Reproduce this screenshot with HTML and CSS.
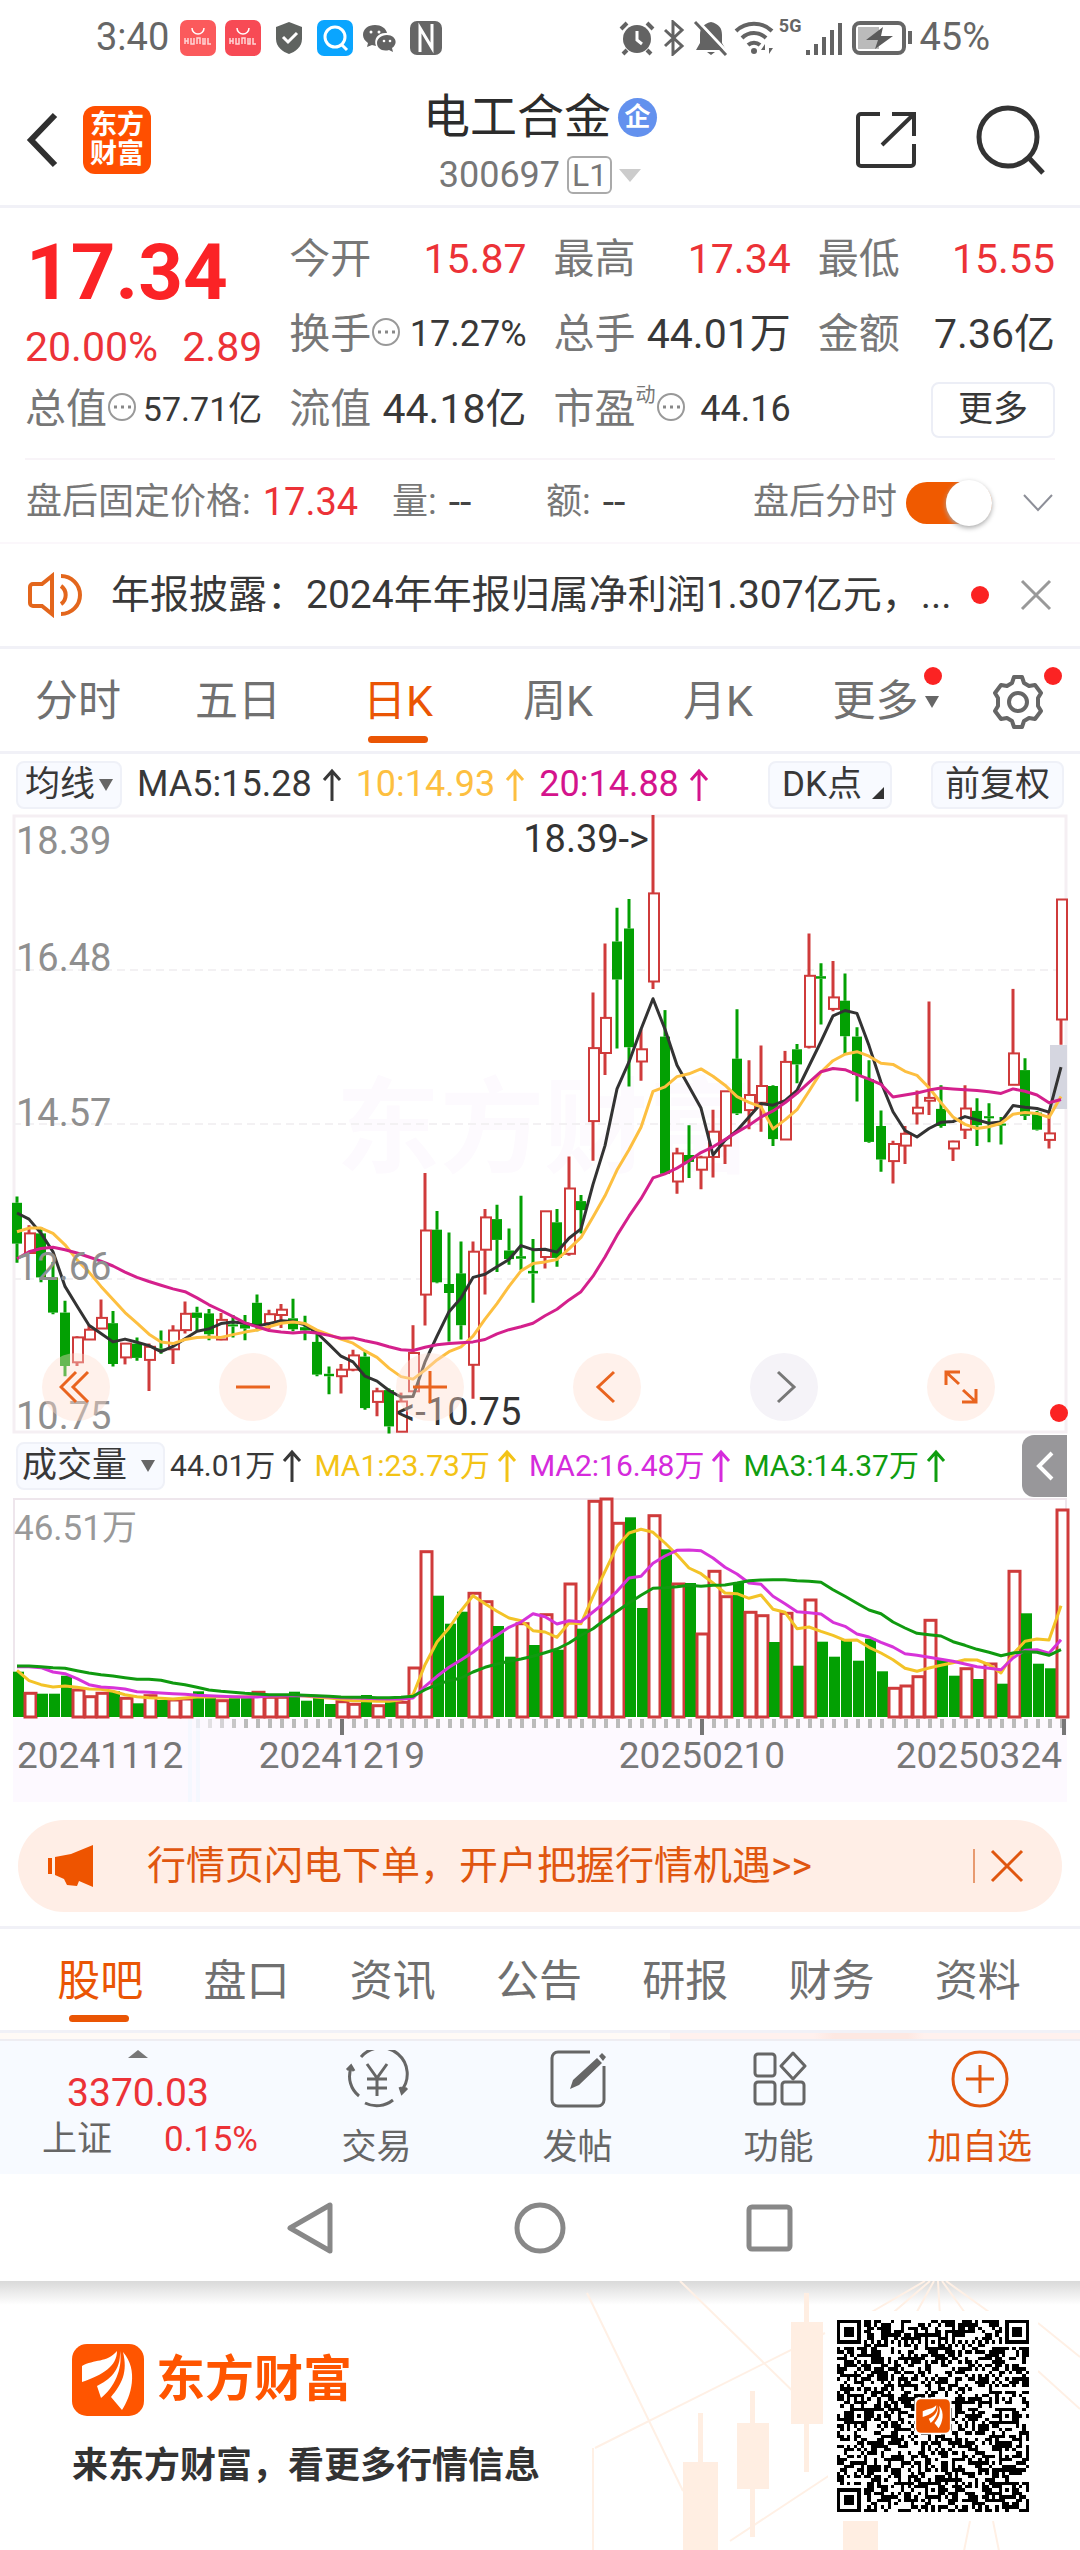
FILE: index.html
```html
<!DOCTYPE html>
<html lang="zh-CN">
<head>
<meta charset="utf-8">
<meta name="viewport" content="width=device-width, initial-scale=1">
<title>电工合金 300697</title>
<link rel="stylesheet" href="styles.css">
</head>
<body>
<div class="status">
  <div class="status-side">
    <span class="status-text">3:40</span>
    <svg class="app" viewBox="0 0 36 36"><rect width="36" height="36" rx="7" fill="#fb5a5c"/><path d="M12 8a6 6 0 0 0 12 0" fill="none" stroke="#fff" stroke-width="1.5"/><path d="M5 18v6M8 18v6M5 21h3M11 18v6h3v-6M17 24v-6h3v6M23 18v6h2v-6M28 18v6h3" stroke="#ffd5d5" stroke-width="1.5" fill="none"/></svg>
    <svg class="app" viewBox="0 0 36 36"><rect width="36" height="36" rx="7" fill="#f74a55"/><path d="M12 8a6 6 0 0 0 12 0" fill="none" stroke="#fff" stroke-width="1.5"/><path d="M5 18v6M8 18v6M5 21h3M11 18v6h3v-6M17 24v-6h3v6M23 18v6h2v-6M28 18v6h3" stroke="#ffd5d5" stroke-width="1.5" fill="none"/></svg>
    <svg class="shield" viewBox="0 0 28 34"><path d="M14 1 27 6v12c0 8-7 13-13 15C8 31 1 26 1 18V6z" fill="#5f6360"/><path d="m8 16 5 5 9-9" fill="none" stroke="#fff" stroke-width="3"/></svg>
    <svg class="app" viewBox="0 0 36 36"><rect width="36" height="36" rx="7" fill="#0aa5ff"/><circle cx="18" cy="17" r="10" fill="none" stroke="#fff" stroke-width="3"/><path d="m24 24 6 6" stroke="#fff" stroke-width="3"/></svg>
    <svg class="app" viewBox="0 0 36 36"><path d="M13 5C6 5 1 9 1 15c0 3 2 6 5 8l-1 4 5-2 4 1c-3-8 3-14 11-13C24 8 19 5 13 5z" fill="#636363"/><path d="M25 15c-6 0-10 4-10 8 0 5 5 9 12 7l4 2-1-4c7-5 3-13-5-13z" fill="#636363"/><g fill="#fff"><circle cx="9" cy="12" r="1.5"/><circle cx="17" cy="12" r="1.5"/><circle cx="22" cy="21" r="1.3"/><circle cx="28" cy="21" r="1.3"/></g></svg>
    <svg class="shield" viewBox="0 0 32 34"><rect width="32" height="34" rx="7" fill="#666"/><path d="M10 31V7l12 20V3" fill="none" stroke="#fff" stroke-width="3"/></svg>
  </div>
  <div class="status-side status-right">
    <svg class="app" viewBox="0 0 36 36"><circle cx="18" cy="19" r="14" fill="#636363"/><path d="M2 9l6-6M34 9l-6-6M8 30l-4 4M28 30l4 4" stroke="#636363" stroke-width="4"/><path d="M18 11v9l5 4" fill="none" stroke="#fff" stroke-width="3"/></svg>
    <svg class="bt" viewBox="0 0 24 36"><path d="m3 10 17 16-9 8V2l9 8L3 26" fill="none" stroke="#636363" stroke-width="3"/></svg>
    <svg class="app" viewBox="0 0 36 36"><path d="M18 2c-8 2-11 6-11 13v8l-4 7h30l-4-7v-8c0-7-3-11-11-13zM14 32h8l-4 3z" fill="#636363"/><path d="m4 0 31 33" stroke="#fff" stroke-width="3"/><path d="m2 2 31 33" stroke="#636363" stroke-width="3"/></svg>
    <svg class="wifi" viewBox="0 0 40 36"><path d="M2 11a26 26 0 0 1 36 0M8 18a17 17 0 0 1 24 0M14 25a9 9 0 0 1 12 0" fill="none" stroke="#636363" stroke-width="4"/><circle cx="20" cy="31" r="3" fill="#636363"/><path d="m31 24-4 6h4zM35 34l4-6h-4z" fill="#636363"/></svg>
    <span class="status-net">5G</span>
    <svg class="signal" viewBox="0 0 36 36"><path d="M2 35v-5M10 35V24M18 35V17M26 35V10M34 35V3" stroke="#636363" stroke-width="4"/></svg>
    <svg class="battery" viewBox="0 0 62 34"><rect x="2" y="2" width="50" height="30" rx="6" fill="none" stroke="#666" stroke-width="4"/><rect x="6" y="6" width="21" height="22" fill="#bbb"/><path d="m31 6-17 13h12l-3 9 18-13H29z" fill="#5b5b5b"/><path d="M58 10v13" stroke="#666" stroke-width="4"/></svg>
    <span class="status-text">45%</span>
  </div>
</div>

<header class="header">
  <div class="header-left">
    <button class="icon-btn" aria-label="返回"><svg width="34" height="56" viewBox="0 0 34 56"><path d="M29 3 5 28l24 25" fill="none" stroke="#303030" stroke-width="6"/></svg></button>
    <a class="logo" href="#">东方<br>财富</a>
  </div>
  <div class="title">
    <h1>电工合金<span class="badge">企</span></h1>
    <button class="code">300697<span class="level">L1</span><i class="tri tri-light"></i></button>
  </div>
  <div class="header-right">
    <button class="icon-btn" aria-label="分享"><svg width="60" height="60" viewBox="0 0 60 60"><path d="M24 4H5a3 3 0 0 0-3 3v46a3 3 0 0 0 3 3h50a3 3 0 0 0 3-3V34M36 4h22v22M58 4 26 35" fill="none" stroke="#333" stroke-width="4"/></svg></button>
    <button class="icon-btn" aria-label="搜索"><svg width="70" height="70" viewBox="0 0 70 70"><circle cx="32" cy="32" r="29" fill="none" stroke="#333" stroke-width="5"/><path d="m53 53 14 15" stroke="#333" stroke-width="5"/></svg></button>
  </div>
</header>

<section class="quote">
  <div class="price-cell">
    <strong>17.34</strong>
    <div class="pair red"><span>20.00%</span><span>2.89</span></div>
  </div>
  <div class="pair"><span class="label">今开</span><span class="red">15.87</span></div>
  <div class="pair"><span class="label">最高</span><span class="red">17.34</span></div>
  <div class="pair"><span class="label">最低</span><span class="red">15.55</span></div>
  <div class="pair"><span class="label">换手<svg class="info" viewBox="0 0 30 30"><circle cx="15" cy="15" r="13" fill="none" stroke="#999" stroke-width="2"/><path d="M7 15h3m4 0h3m4 0h3" stroke="#888" stroke-width="3"/></svg></span><span class="mid">17.27%</span></div>
  <div class="pair"><span class="label">总手</span><span>44.01万</span></div>
  <div class="pair"><span class="label">金额</span><span>7.36亿</span></div>
  <div class="pair"><span class="label">总值<svg class="info" viewBox="0 0 30 30"><circle cx="15" cy="15" r="13" fill="none" stroke="#999" stroke-width="2"/><path d="M7 15h3m4 0h3m4 0h3" stroke="#888" stroke-width="3"/></svg></span><span class="small">57.71亿</span></div>
  <div class="pair"><span class="label">流值</span><span>44.18亿</span></div>
  <div class="pair"><span class="label">市盈<sup>动</sup><svg class="info" viewBox="0 0 30 30"><circle cx="15" cy="15" r="13" fill="none" stroke="#999" stroke-width="2"/><path d="M7 15h3m4 0h3m4 0h3" stroke="#888" stroke-width="3"/></svg></span><span class="mid">44.16</span></div>
  <div class="pair pair-end"><button class="more">更多</button></div>
</section>

<section class="after">
  <span class="after-item after-price">盘后固定价格: <b>17.34</b></span>
  <span class="after-item after-num">量: <em>--</em></span>
  <span class="after-item after-num">额: <em>--</em></span>
  <label class="after-item after-toggle" for="after-toggle">盘后分时<input class="toggle" type="checkbox" id="after-toggle" checked></label>
  <button class="icon-btn" aria-label="展开"><svg width="32" height="22" viewBox="0 0 32 22"><path d="m2 3 14 15L30 3" fill="none" stroke="#8d8f98" stroke-width="2"/></svg></button>
</section>

<section class="news">
  <svg width="54" height="46" viewBox="0 0 54 46"><path d="M24 4v38l-10-8H5a3 3 0 0 1-3-3V15a3 3 0 0 1 3-3h9zM33 14a11 11 0 0 1 0 18M33 4a19 19 0 0 1 0 38" fill="none" stroke="#e3661c" stroke-width="4"/></svg>
  <a class="news-text" href="#">年报披露：2024年年报归属净利润1.307亿元，...</a>
  <i class="dot"></i>
  <button class="icon-btn" aria-label="关闭"><svg width="32" height="32" viewBox="0 0 32 32"><path d="m2 2 28 28M30 2 2 30" stroke="#999" stroke-width="3"/></svg></button>
</section>

<nav class="tabs">
  <button>分时</button><button>五日</button><button class="on">日K</button><button>周K</button><button>月K</button>
  <button class="tab-more">更多<i class="tri"></i><i class="dot corner"></i></button>
  <button aria-label="设置"><svg width="54" height="54" viewBox="0 0 54 54"><path d="M23 2h8l2 6 5 3 6-1 6 8-3 5v8l3 5-6 8-6-1-5 3-2 6h-8l-2-6-5-3-6 1-6-8 3-5v-8l-3-5 6-8 6 1 5-3z" fill="none" stroke="#666" stroke-width="4" stroke-linejoin="round"/><circle cx="27" cy="27" r="9" fill="none" stroke="#666" stroke-width="4"/></svg><i class="dot corner"></i></button>
</nav>

<section class="chart">
  <div class="legend">
    <button class="pill">均线<i class="tri"></i></button>
    <span class="ma">MA5:15.28<svg class="up" viewBox="0 0 20 34"><path d="M10 33V3M2 12l8-9 8 9"/></svg></span>
    <span class="ma ma-yellow">10:14.93<svg class="up" viewBox="0 0 20 34"><path d="M10 33V3M2 12l8-9 8 9"/></svg></span>
    <span class="ma ma-pink">20:14.88<svg class="up" viewBox="0 0 20 34"><path d="M10 33V3M2 12l8-9 8 9"/></svg></span>
    <button class="pill pill-dk">DK点<svg width="12" height="12" viewBox="0 0 12 12"><path d="M12 0v12H0z" fill="#333"/></svg></button>
    <button class="pill">前复权</button>
  </div>
  <div class="pane">
    <svg id="price" class="plot" viewBox="0 0 1054 618"></svg>
    <div class="tools">
      <button aria-label="最早"><svg width="34" height="34" viewBox="0 0 34 34"><path d="M17 2 2 17l15 15M29 2 14 17l15 15"/></svg></button>
      <button aria-label="缩小"><svg width="34" height="34" viewBox="0 0 34 34"><path d="M0 17h34"/></svg></button>
      <button aria-label="放大"><svg width="34" height="34" viewBox="0 0 34 34"><path d="M0 17h34M17 1v32"/></svg></button>
      <button aria-label="左移"><svg width="34" height="34" viewBox="0 0 34 34"><path d="M24 2 8 17l16 15"/></svg></button>
      <button class="off" aria-label="右移"><svg width="34" height="34" viewBox="0 0 34 34"><path d="m11 2 16 15-16 15"/></svg></button>
      <button aria-label="全屏"><svg width="34" height="34" viewBox="0 0 34 34"><path d="M2 15V2h14M2 2l13 12M32 19v13H18M32 32 19 20"/></svg></button>
    </div>
    <i class="dot live"></i>
  </div>
  <div class="legend legend-vol">
    <button class="pill pill-vol">成交量<i class="tri"></i></button>
    <span class="ma">44.01万<svg class="up" viewBox="0 0 20 34"><path d="M10 33V3M2 12l8-9 8 9"/></svg></span>
    <span class="ma ma-gold">MA1:23.73万<svg class="up" viewBox="0 0 20 34"><path d="M10 33V3M2 12l8-9 8 9"/></svg></span>
    <span class="ma ma-violet">MA2:16.48万<svg class="up" viewBox="0 0 20 34"><path d="M10 33V3M2 12l8-9 8 9"/></svg></span>
    <span class="ma ma-green">MA3:14.37万<svg class="up" viewBox="0 0 20 34"><path d="M10 33V3M2 12l8-9 8 9"/></svg></span>
    <button class="drawer" aria-label="展开侧栏"><svg width="20" height="32" viewBox="0 0 20 32"><path d="M17 3 4 16l13 13" fill="none" stroke="#fff" stroke-width="4"/></svg></button>
  </div>
  <svg id="volume" class="plot" viewBox="0 0 1054 304"></svg>
</section>

<aside class="banner">
  <svg width="48" height="42" viewBox="0 0 48 42"><path d="M1 13h4v16H1zM8 12 24 9 46 0v42l-14-6-2 5-10-1-3-6-9-4z" fill="#ee5400"/></svg>
  <a href="#">行情页闪电下单，开户把握行情机遇&gt;&gt;</a>
  <button class="icon-btn" aria-label="关闭"><svg width="34" height="34" viewBox="0 0 34 34"><path d="m2 2 30 30M32 2 2 32" stroke="#e0560f" stroke-width="3"/></svg></button>
</aside>

<nav class="tabs info-tabs">
  <button class="on">股吧</button><button>盘口</button><button>资讯</button><button>公告</button><button>研报</button><button>财务</button><button>资料</button>
</nav>
<div class="peek"><i></i></div>

<nav class="bottom">
  <a class="index red" href="#">
    <i class="tri tri-up"></i>
    <span class="index-value">3370.03</span>
    <span class="index-row"><span class="gray">上证</span><span>0.15%</span></span>
  </a>
  <a href="#"><svg width="64" height="58" viewBox="0 0 64 58"><path d="M14 46A25 25 0 0 1 6 18M2 20l4-4 3 5M16 7a26 26 0 0 1 40 34M62 38l-5 5-2-6M48 50a26 26 0 0 1-28 3M22 14l10 14 10-14M22 29h20M22 38h20M32 28v18" fill="none" stroke="#666" stroke-width="3"/></svg>交易</a>
  <a href="#"><svg width="56" height="58" viewBox="0 0 56 58"><path d="M40 2H8a6 6 0 0 0-6 6v42a6 6 0 0 0 6 6h40a6 6 0 0 0 6-6V16" fill="none" stroke="#666" stroke-width="3"/><path d="m20 39 3-9L47 8l5 5-23 22zM49 6l3-3 4 4-3 4z" fill="#666"/></svg>发帖</a>
  <a href="#"><svg width="56" height="58" viewBox="0 0 56 58"><g fill="none" stroke="#666" stroke-width="3"><rect x="4" y="4" width="20" height="22" rx="3"/><rect x="4" y="32" width="20" height="22" rx="3"/><rect x="31" y="32" width="22" height="22" rx="3"/><path d="m42 3 12 13-12 13-12-13z" stroke-linejoin="round"/></g></svg>功能</a>
  <a class="add" href="#"><svg width="58" height="58" viewBox="0 0 58 58"><path d="M29 15v28M15 29h28" stroke="#e0560f" stroke-width="3"/><circle cx="29" cy="29" r="27" fill="none" stroke="#e0560f" stroke-width="3"/></svg>加自选</a>
</nav>

<div class="system">
  <button class="icon-btn" aria-label="返回"><svg width="52" height="56" viewBox="0 0 52 56"><path d="M46 5v46L6 28z" fill="none" stroke="#888" stroke-width="5" stroke-linejoin="round"/></svg></button>
  <button class="icon-btn" aria-label="主页"><svg width="52" height="56" viewBox="0 0 52 56"><circle cx="26" cy="28" r="23" fill="none" stroke="#888" stroke-width="5"/></svg></button>
  <button class="icon-btn" aria-label="最近任务"><svg width="52" height="56" viewBox="0 0 52 56"><rect x="5" y="7" width="41" height="42" rx="3" fill="none" stroke="#888" stroke-width="5"/></svg></button>
</div>

<footer class="promo">
  <svg class="promo-art" viewBox="0 0 520 270" aria-hidden="true">
    <g stroke="#fff0e5" stroke-width="2" fill="none"><path d="M120 0 245 122M35 167 265 52M27 12l96 198M170 260l100-66M33 167v103M365 0l-62 36M370 0l-42 36M374 0l-20 36M378 0l2 36M382 0l26 36M386 0l50 36M478 42l42 34M478 90l42 38M410 240l-6 30M433 240l6 30"/></g>
    <g fill="#ffeee2"><path d="M123 181h35v89h-35zM138 132h5v49h-5zM177 142h32v66h-32zM190 110h5v32h-5zM190 208h5v48h-5zM231 41h32v102h-32zM244 12h5v29h-5zM244 143h5v48h-5zM283 240h35v30h-35z"/></g>
  </svg>
  <div class="promo-copy">
    <div class="brand">
      <svg width="72" height="72" viewBox="0 0 72 72"><rect width="72" height="72" rx="15" fill="#ff5500"/><g fill="#fff"><path d="M10 22C22 15 35 19 45 7c0 15-14 24-35 31z"/><path d="M48 7c1 20-11 29-23 35l4 12C42 44 51 25 48 7z"/><path d="M51 8c5 20-1 32-12 45l11 13c9-13 17-40 1-58z"/></g></svg>
      <span>东方财富</span>
    </div>
    <p>来东方财富，看更多行情信息</p>
  </div>
  <div class="qr"><svg id="qr" viewBox="0 0 57 57" role="img" aria-label="二维码"></svg></div>
</footer>
<script src="app.js"></script>
</body>
</html>
```
FILE: styles.css
```css
* { box-sizing: border-box; }
body { margin: 0; background: #fff; color: #383838; font-family: Roboto, "Noto Sans CJK SC", sans-serif; font-size: 36px; line-height: 1.2; }
button { border: 0; padding: 0; margin: 0; background: none; color: inherit; font: inherit; }
a { color: inherit; text-decoration: none; }
svg { display: block; flex: none; }
h1, p { margin: 0; font-weight: 400; }
.red { color: #ec3237; }
.gray { color: #666; }
.icon-btn { display: flex; align-items: center; justify-content: center; }
.dot { display: block; width: 18px; height: 18px; border-radius: 50%; background: #fb2323; }
.tri { display: block; flex: none; border: 7px solid transparent; border-top: 12px solid #666; border-bottom: 0; }
.tri-light { border-width: 11px; border-top: 13px solid #ccc; border-bottom: 0; }
.tri-up { border: 10px solid transparent; border-top: 0; border-bottom: 8px solid #777; }

.status { display: flex; justify-content: space-between; align-items: center; height: 78px; padding: 0 88px 2px 96px; color: #666; }
.status-side { display: flex; align-items: center; gap: 9px; }
.status-right { gap: 5px; }
.status-text { font-size: 38px; margin-right: 2px; }
.status-net { font-size: 18px; align-self: flex-start; font-weight: 700; }
.app { width: 36px; height: 36px; }
.shield { width: 32px; height: 34px; margin: 0 3px; }
.bt { width: 28px; height: 36px; }
.wifi { width: 40px; height: 36px; }
.signal { width: 36px; height: 36px; }
.battery { width: 62px; height: 34px; margin-left: 5px; }

.header { display: grid; grid-template-columns: 1fr auto 1fr; align-items: center; min-height: 130px; border-bottom: 3px solid #f1f1f7; padding-bottom: 4px; }
.header-left { display: flex; align-items: center; gap: 23px; padding-left: 26px; }
.logo { width: 68px; height: 68px; border-radius: 12px; background: #ff4f00; color: #fff; font-size: 27px; line-height: 29px; font-weight: 700; text-align: center; padding-top: 5px; }
.title { display: flex; flex-direction: column; align-items: center; padding-top: 5px; }
h1 { display: flex; align-items: center; gap: 7px; color: #2c2c2c; font-size: 47px; line-height: 66px; }
.badge { width: 39px; height: 39px; border-radius: 50%; background: #6391ee; color: #fff; font-size: 26px; line-height: 38px; font-weight: 700; text-align: center; }
.code { display: flex; align-items: center; gap: 7px; color: #777; line-height: 50px; }
.level { border: 2px solid #aaa; border-radius: 6px; padding: 0 3px; font-size: 32px; line-height: 34px; }
.header-right { display: flex; align-items: center; justify-content: flex-end; gap: 60px; padding-right: 34px; }

.quote { display: grid; grid-template-columns: repeat(4, minmax(0, 1fr)); grid-auto-rows: 75px; column-gap: 27px; margin: 0 25px; padding: 14px 0 11px; border-bottom: 2px solid #f8f4f8; font-size: 41px; white-space: nowrap; }
.price-cell { grid-row: span 2; display: flex; flex-direction: column; padding-top: 5px; }
.price-cell strong { color: #fb2326; font-size: 78px; line-height: 92px; padding-left: 1px; }
.price-cell .pair { line-height: 56px; }
.pair { display: flex; align-items: center; justify-content: space-between; }
.pair-end { justify-content: flex-end; }
.label { display: flex; align-items: center; color: #777; }
.label sup { font-size: 20px; line-height: 20px; align-self: flex-start; }
.info { width: 30px; height: 30px; margin-bottom: 6px; }
.small { font-size: 34px; }
.mid { font-size: 36px; }
.more { width: 124px; height: 56px; border: 2px solid #eceef6; border-radius: 8px; font-size: 35px; }

.after { display: flex; align-items: center; min-height: 84px; padding: 4px 26px 0; border-bottom: 2px solid #fbf7fb; color: #777; }
.after-item { display: flex; align-items: center; gap: 12px; white-space: nowrap; }
.after-price { flex: 366; }
.after-price b { color: #ec3237; font-weight: 400; font-size: 38px; }
.after-num { flex: 154; }
.after-item em { color: #444; font-style: normal; font-size: 41px; }
.after-toggle { flex: 292; justify-content: flex-end; gap: 9px; margin-right: 30px; }
.toggle { appearance: none; flex: none; display: flex; justify-content: flex-end; align-items: center; width: 86px; height: 42px; margin: 0; border-radius: 21px; background: #f05a00; }
.toggle::before { content: ""; width: 46px; height: 46px; border-radius: 50%; background: #fff; box-shadow: 0 2px 5px #aaa; }

.news { display: flex; align-items: center; min-height: 105px; padding: 0 28px; border-bottom: 3px solid #f1f1f7; font-size: 39px; }
.news-text { flex: 1; padding-left: 29px; white-space: nowrap; }
.news .icon-btn { margin-left: 31px; }

.tabs { display: grid; grid-template-columns: repeat(6, 4fr) 3fr; min-height: 105px; border-bottom: 3px solid #f1f1f7; font-size: 43px; color: #707070; }
.tabs button { position: relative; display: flex; align-items: center; justify-content: center; padding: 4px 4px 0 0; white-space: nowrap; }
.tabs .on { color: #ea5504; }
.tabs .on::after { content: ""; position: absolute; left: 50%; bottom: 8px; width: 60px; height: 7px; margin-left: -32px; border-radius: 4px; background: #ea5504; }
.tab-more .tri { margin-left: 6px; }
.tabs .tab-more { padding-left: 15px; }
.corner { position: absolute; right: 18px; top: 18px; }

.chart { padding: 0 13px; }
.legend { display: flex; align-items: center; min-height: 61px; white-space: nowrap; }
.pill { display: flex; align-items: center; justify-content: center; gap: 4px; height: 48px; padding: 0 7px; margin: 0 15px 0 3px; border: 2px solid #eff1f8; border-radius: 8px; background: #f8faff; font-size: 35px; }
.pill-dk { margin-left: auto; margin-right: 36px; padding: 0 6px 0 12px; gap: 10px; }
.pill-dk svg { align-self: flex-end; margin-bottom: 8px; }
.legend .pill:last-child { margin-right: 3px; padding: 0 12px; }
.ma { display: flex; align-items: center; gap: 10px; margin-right: 14px; }
.up { width: 20px; height: 34px; fill: none; stroke: currentColor; stroke-width: 3px; }
.ma-yellow { color: #fdbf40; }
.ma-pink { color: #d4148c; }
.ma-gold { color: #f3c316; }
.ma-violet { color: #d52bdc; }
.ma-green { color: #0f9d0f; }
.pane { position: relative; }
.plot { width: 100%; height: auto; overflow: visible; font-size: 38px; }
.tools { position: absolute; left: 0; right: 0; bottom: 12px; display: flex; justify-content: space-between; padding: 0 72px 0 29px; }
.tools button { display: flex; align-items: center; justify-content: center; width: 68px; height: 68px; border-radius: 50%; background: rgba(255, 221, 205, .4); }
.tools svg { fill: none; stroke: #e9641f; stroke-width: 3px; }
.tools .off { background: #f5f3f8; }
.tools .off svg { stroke: #777; }
.live { position: absolute; right: -1px; bottom: 11px; }
.legend-vol { min-height: 65px; font-size: 30px; }
.legend-vol .pill { margin-right: 5px; }
.legend-vol .pill-vol { gap: 14px; padding: 0 8px 0 4px; }
.legend-vol .ma { gap: 7px; margin-right: 12px; }
.drawer { display: flex; align-items: center; justify-content: center; width: 45px; height: 62px; margin-left: auto; border-radius: 12px 0 0 12px; background: #98979a; }

.banner { display: flex; align-items: center; min-height: 92px; margin: 18px 18px 14px; padding: 0 38px 0 29px; border-radius: 46px; background: #ffeee6; color: #e0560f; font-size: 39px; }
.banner a { flex: 1; padding-left: 52px; white-space: nowrap; }
.banner .icon-btn { border-left: 2px solid #e89a70; padding-left: 15px; }
.info-tabs { grid-template-columns: repeat(7, 1fr); padding: 0 28px; border-top: 3px solid #f1f1f7; min-height: 107px; }
.info-tabs button { padding: 5px 2px 0 0; }
.peek { height: 8px; padding-left: 62%; background: #fffaf6; border-bottom: 2px solid #eeedf2; }
.peek i { display: block; height: 6px; background: linear-gradient(90deg, #fff1ee 35%, #fde8e2 40% 58%, #fff1ee 62%); }

.bottom { display: grid; grid-template-columns: 276fr repeat(4, 201fr); min-height: 133px; background: #f7faff; color: #666; font-size: 35px; }
.bottom a { display: flex; flex-direction: column; align-items: center; padding-top: 9px; line-height: 42px; }
.bottom a svg { margin-bottom: 19px; }
.bottom .red { color: #ec3237; }
.bottom .add { color: #e0560f; }
.index-value { font-size: 39px; line-height: 54px; padding-top: 8px; }
.index-row { display: flex; gap: 52px; padding-left: 24px; line-height: 40px; }
.system { display: flex; justify-content: center; gap: 178px; min-height: 107px; }

.promo { position: relative; display: flex; justify-content: space-between; align-items: flex-start; min-height: 270px; padding: 30px 42px 30px 72px; background: linear-gradient(#d9d9d9, #fff 24px); }
.promo-art { position: absolute; right: 0; top: 0; width: 520px; height: 270px; }
.promo-copy { padding-top: 33px; }
.brand { display: flex; align-items: center; gap: 12px; color: #ff5500; font-size: 49px; font-weight: 700; line-height: 72px; }
.promo p { margin-top: 28px; color: #333; font-size: 36px; font-weight: 700; line-height: 44px; }
.qr { position: relative; padding: 9px; background: #fff; }
.qr svg { width: 192px; height: 192px; }
```
FILE: app.js
```js
// One row per trading day: r/g, high, body top, body bottom, low, top of volume bar.
// Prices are measured down from the pane's 35 line to its 1548 line, volume from 200 to 857.
const days = `g 970 985 1085 1132 721|r 1040 1060 1108 1108 783|g 1045 1060 1168 1180 787|g 1130 1168 1254 1258 787|g 1225 1254 1385 1410 733|r 1312 1315 1376 1385 773|r 1285 1296 1320 1320 793|r 1222 1267 1293 1293 783|g 1250 1280 1380 1386 780|r 1330 1330 1364 1381 798|g 1315 1330 1365 1372 816|r 1330 1338 1370 1446 790|g 1298 1342 1348 1355 806|r 1285 1298 1344 1380 803|r 1227 1257 1297 1305 800|g 1240 1254 1267 1300 780|g 1245 1256 1307 1322 797|r 1255 1272 1320 1322 805|g 1260 1283 1288 1315 800|g 1260 1283 1293 1322 800|g 1210 1230 1285 1300 780|r 1247 1258 1280 1295 795|r 1233 1247 1260 1292 795|g 1220 1268 1295 1300 781|g 1262 1290 1298 1322 808|g 1305 1326 1406 1410 800|g 1386 1404 1410 1454 818|r 1380 1394 1410 1452 808|r 1345 1359 1394 1398 816|g 1350 1362 1488 1492 791|r 1438 1447 1473 1508 820|g 1440 1444 1533 1550 810|r 1450 1472 1546 1546 810|r 1285 1353 1447 1447 707|r 912 1053 1210 1286 358|g 1005 1051 1180 1182 493|g 1058 1184 1206 1325 577|g 1080 1158 1285 1320 541|r 1080 1105 1382 1465 483|r 1000 1021 1100 1210 508|g 990 1025 1076 1155 584|g 1048 1102 1123 1137 676|g 968 1116 1122 1150 574|g 1074 1152 1158 1230 641|r 1005 1006 1118 1146 547|g 1000 1033 1120 1142 655|r 872 950 1110 1115 455|g 966 981 1003 1060 592|r 470 606 785 882 207|r 350 532 618 672 200|g 262 345 438 607 273|g 241 313 604 700 258|r 560 609 639 686 530|r 35 227 443 461 250|g 513 578 914 914 354|r 850 864 933 963 455|g 795 868 885 924 455|r 870 874 904 952 605|r 757 811 873 923 417|r 712 712 845 890 493|g 511 632 766 770 453|r 636 721 758 805 540|r 600 699 740 811 550|g 697 699 829 846 632|r 613 640 830 830 543|g 596 609 646 692 703|r 325 429 603 607 503|g 398 430 436 548 631|r 393 482 510 516 676|g 423 490 577 622 624|g 555 578 672 737 688|g 636 682 836 838 622|g 759 797 879 909 720|r 833 841 883 938 768|r 797 816 845 890 761|r 710 752 766 793 733|r 492 728 735 770 564|g 697 755 797 801 684|r 833 835 852 883 733|r 697 754 806 829 709|g 729 760 795 846 743|g 741 773 778 837 695|g 775 791 796 842 757|r 461 619 696 696 417|g 631 660 772 782 546|g 760 764 806 808 697|r 765 815 831 852 711|r 241 242 536 598 233`
  .split('|').map(d => d.split(' '));
// Days whose volume bar is coloured against the candle.
const volumeFlip = { 20: 'r', 42: 'r', 50: 'r', 52: 'g', 68: 'g', 78: 'g', 81: 'r', 86: 'g' };

const list = s => s.split(' ').map(Number);
const ma5 = list('1010 1025 1060 1105 1190 1238 1285 1305 1326 1319 1327 1335 1350 1337 1318 1300 1294 1281 1277 1280 1287 1281 1274 1276 1284 1304 1332 1361 1375 1410 1422 1445 1461 1460 1375 1312 1252 1218 1168 1160 1142 1124 1090 1100 1099 1106 1072 1049 940 845 706 640 560 485 560 648 700 753 868 832 808 775 742 746 735 710 650 590 527 514 521 600 690 762 808 824 803 788 786 774 782 790 787 747 751 754 763 653');
const ma10 = list('1056 1047 1047 1060 1088 1125 1155 1190 1222 1254 1280 1307 1326 1330 1320 1315 1314 1315 1308 1302 1297 1289 1280 1277 1281 1297 1308 1319 1329 1348 1364 1390 1411 1417 1395 1370 1350 1338 1312 1270 1232 1190 1152 1134 1130 1124 1098 1070 1020 968 905 855 800 712 701 676 669 657 675 697 725 739 750 804 782 757 712 665 637 621 615 626 643 646 663 673 703 740 775 793 803 799 790 768 764 766 776 725');
const ma20 = list('1122 1105 1097 1094 1100 1108 1118 1128 1140 1155 1168 1178 1187 1196 1203 1218 1235 1249 1264 1279 1289 1298 1302 1304 1302 1304 1310 1317 1316 1323 1329 1338 1345 1347 1339 1333 1330 1328 1326 1320 1306 1296 1289 1280 1262 1246 1223 1203 1165 1118 1065 1018 975 924 914 900 882 862 848 830 812 795 775 760 740 717 690 664 656 659 671 682 695 726 721 716 709 704 706 708 710 713 717 706 712 721 740 732');
const vol5 = list('717 748 760 767 764 768 773 774 780 790 796 799 801 803 800 797 796 797 797 796 795 793 793 792 794 798 800 804 808 808 810 810 806 790 700 632 590 538 493 517 540 560 568 598 602 618 575 577 495 420 345 305 294 303 335 370 410 427 455 485 487 501 491 534 543 592 587 600 612 627 626 648 665 685 711 720 710 702 694 685 686 700 725 668 630 623 626 523');
const vol10 = list('706 706 709 722 727 742 760 767 769 773 781 783 785 787 789 792 793 795 796 797 797 794 793 793 793 795 797 799 800 801 802 803 803 800 765 735 708 686 663 636 612 588 572 547 556 578 568 571 542 513 480 440 435 396 374 357 356 358 380 408 428 455 459 495 517 541 544 548 573 585 608 617 633 647 667 672 678 684 690 698 706 711 715 680 657 655 666 625');
const vol20 = list('704 704 706 709 711 718 725 730 734 739 744 744 747 755 760 768 776 780 783 786 788 790 790 790 792 793 795 797 798 798 799 799 798 795 775 760 748 740 722 708 698 690 683 675 664 653 635 612 592 565 540 515 492 471 469 466 462 465 462 461 455 448 446 445 445 448 450 453 475 495 516 536 547 572 590 606 610 614 631 642 654 663 673 665 661 663 672 655');

const RED = '#cf3b3b', GREEN = '#03a003';
const x = i => 4 + 12 * i;
const py = v => ((v - 35) / 2.45).toFixed(1);
const vy = v => ((v - 200) / 3).toFixed(1);
const line = (vals, y, color) => `<polyline fill="none" stroke="${color}" stroke-width="3" stroke-linejoin="round" points="${vals.map((v, i) => x(i) + ',' + y(v)).join(' ')}"/>`;
const text = (tx, ty, s, color, extra = '') => `<text x="${tx}" y="${ty}" fill="${color}" ${extra}>${s}</text>`;

function drawPrice() {
  let out = '<rect x="1" y="1" width="1052" height="616" fill="none" stroke="#f5eff3" stroke-width="3"/>';
  out += text(323, 350, '东方财富', '#fdfafe', 'font-size="104" font-weight="700"');
  for (const gy of [155, 309, 464]) out += `<path d="M0 ${gy}H1054" stroke="#f3f1f3" stroke-width="2" stroke-dasharray="8 5"/>`;
  out += '<rect x="1037" y="230" width="17" height="64" fill="#d5d6e0"/>';
  days.forEach(([c, hi, top, bot, lo], i) => {
    const color = c === 'r' ? RED : GREEN, t = +py(top), b = +py(bot), h = Math.max(b - t, 2);
    out += `<path d="M${x(i)} ${py(hi)}V${t}M${x(i)} ${b}V${py(lo)}" stroke="${color}" stroke-width="3"/>`;
    out += c === 'r'
      ? `<rect x="${x(i) - 4}" y="${t}" width="10" height="${h}" fill="#fff" stroke="${color}" stroke-width="2"/>`
      : `<rect x="${x(i) - 5}" y="${t}" width="10" height="${h}" fill="${color}"/>`;
  });
  out += line(ma5, py, '#333') + line(ma10, py, '#fdbf40') + line(ma20, py, '#d4208c');
  [['18.39', 39], ['16.48', 156], ['14.57', 311], ['12.66', 465], ['10.75', 614]].forEach(([s, ty]) => out += text(3, ty, s, '#8f8f8f'));
  out += text(636, 37, '18.39-&gt;', '#333', 'text-anchor="end"') + text(383, 610, '&lt;-10.75', '#333');
  document.getElementById('price').innerHTML = out;
}

function drawVolume() {
  let out = '<rect y="220" width="1054" height="84" fill="#fdf9ff"/><path d="M177 220v84M185 220v84" stroke="#f5f8ff" stroke-width="4"/>';
  out += '<path d="M0 1H1054M1 0V219M1053 0V219" fill="none" stroke="#eee6ec" stroke-width="2"/>';
  days.forEach((d, i) => {
    const c = volumeFlip[i] || d[0], t = +vy(d[5]);
    out += c === 'r'
      ? `<rect x="${x(i) - 4}" y="${t + 1}" width="11" height="${218 - t}" fill="#fff" stroke="${RED}" stroke-width="3"/>`
      : `<rect x="${x(i) - 4}" y="${t}" width="11" height="${219 - t}" fill="${GREEN}"/>`;
    if (i > 14) out += `<path d="M${x(i) + 1} 221v9" stroke="#bbb" stroke-width="4" opacity="${Math.min(1, (i - 14) / 5)}"/>`;
  });
  out += '<path d="M329 221v16M689 221v16M1051 221v16" stroke="#777" stroke-width="4"/>';
  out += line(vol5, vy, '#f3c327') + line(vol10, vy, '#d733d9') + line(vol20, vy, '#109a10');
  out += text(1, 42, '46.51万', '#999', 'font-size="35"');
  out += text(4, 270, '20241112', '#777', 'font-size="37"') + text(329, 270, '20241219', '#777', 'font-size="37" text-anchor="middle"');
  out += text(689, 270, '20250210', '#777', 'font-size="37" text-anchor="middle"') + text(1049, 270, '20250324', '#777', 'font-size="37" text-anchor="end"');
  document.getElementById('volume').innerHTML = out;
}

function drawQr() {
  const N = 57;
  let seed = 300697, d = '';
  const rand = () => (seed = (seed * 1103515245 + 12345) % 2147483648) / 2147483648;
  const ring = (r, c, cr, cc) => Math.max(Math.abs(r - cr), Math.abs(c - cc));
  for (let r = 0; r < N; r++) for (let c = 0; c < N; c++) {
    let on = rand() < 0.5;
    if (r === 6 || c === 6) on = (r + c) % 2 === 0;
    for (const [a, b] of [[6, 28], [28, 6], [28, 50], [50, 28], [50, 50]]) {
      const k = ring(r, c, a, b);
      if (k <= 2) on = k !== 1;
    }
    for (const [a, b] of [[3, 3], [3, 53], [53, 3]]) {
      const k = ring(r, c, a, b);
      if (k <= 4) on = k !== 4 && k !== 2;
    }
    if (on) d += `M${c} ${r}h1v1h-1z`;
  }
  document.getElementById('qr').innerHTML = `<path d="${d}" shape-rendering="crispEdges"/><rect x="23" y="23" width="11" height="11" rx="1" fill="#fff"/>
    <g transform="translate(23.5 23.5) scale(.139)"><rect width="72" height="72" rx="10" fill="#ee5500"/><g fill="#fff"><path d="M14 26C24 20 35 22 43 13c0 13-12 20-29 25z"/><path d="M46 13c1 16-9 24-19 29l4 9C41 43 49 28 46 13z"/><path d="M49 14c4 16-1 26-10 37l9 11c8-11 14-34 1-48z"/></g></g>`;
}

drawPrice();
drawVolume();
drawQr();
```
